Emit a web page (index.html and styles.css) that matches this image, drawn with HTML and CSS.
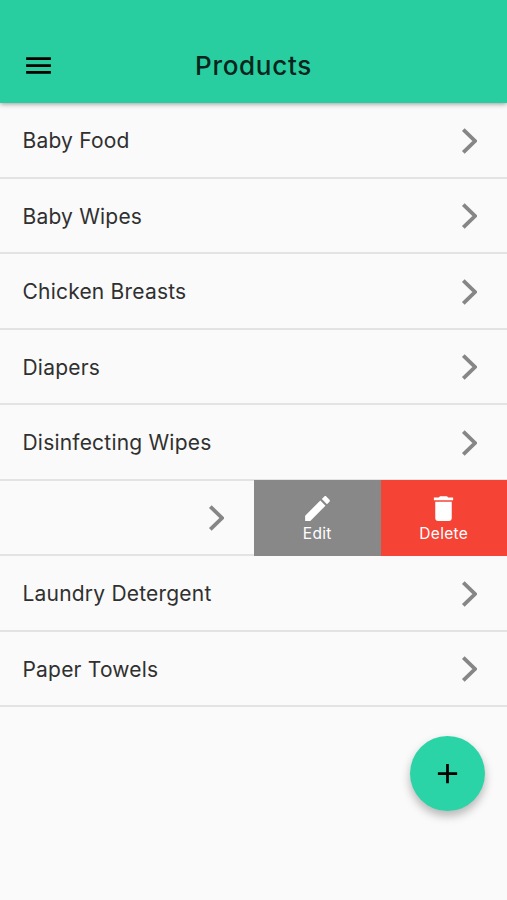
FILE: index.html
```html
<!DOCTYPE html>
<html lang="en">
<head>
  <meta charset="UTF-8" />
  <meta name="viewport" content="width=device-width, initial-scale=1.0"/>
  <title>Products</title>
  <link rel="stylesheet" href="styles.css">
</head>
<body>

  <svg class="symbols" aria-hidden="true">
    <symbol id="chevron" viewBox="0 0 16 28">
      <path d="M2.3 2.6L14 14 2.3 25.4"/>
    </symbol>
  </svg>

  <header class="app-bar">
    <button class="menu-btn" aria-label="Menu">
      <svg viewBox="0 0 24 24"><path d="M3 18h18v-2H3v2zm0-5h18v-2H3v2zm0-7v2h18V6H3z"/></svg>
    </button>
    <h1>Products</h1>
  </header>

  <ul class="products">
    <li class="row"><span>Baby Food</span><svg class="chevron"><use href="#chevron"/></svg></li>
    <li class="row"><span>Baby Wipes</span><svg class="chevron"><use href="#chevron"/></svg></li>
    <li class="row"><span>Chicken Breasts</span><svg class="chevron"><use href="#chevron"/></svg></li>
    <li class="row"><span>Diapers</span><svg class="chevron"><use href="#chevron"/></svg></li>
    <li class="row"><span>Disinfecting Wipes</span><svg class="chevron"><use href="#chevron"/></svg></li>
    <li class="row swiped">
      <div class="slid"><svg class="chevron"><use href="#chevron"/></svg></div>
      <button class="action edit">
        <svg viewBox="0 0 24 24"><path d="M3 17.25V21h3.75L17.81 9.94l-3.75-3.75L3 17.25zM20.71 7.04c.39-.39.39-1.02 0-1.41l-2.34-2.34c-.39-.39-1.02-.39-1.41 0l-1.83 1.83 3.75 3.75 1.83-1.83z"/></svg>
        Edit
      </button>
      <button class="action delete">
        <svg viewBox="0 0 24 24"><path d="M6 19c0 1.1.9 2 2 2h8c1.1 0 2-.9 2-2V7H6v12zM19 4h-3.5l-1-1h-5l-1 1H5v2h14V4z"/></svg>
        Delete
      </button>
    </li>
    <li class="row"><span>Laundry Detergent</span><svg class="chevron"><use href="#chevron"/></svg></li>
    <li class="row"><span>Paper Towels</span><svg class="chevron"><use href="#chevron"/></svg></li>
  </ul>

  <button class="fab" aria-label="Add product">
    <svg viewBox="0 0 24 24"><path d="M19 13h-6v6h-2v-6H5v-2h6V5h2v6h6v2z"/></svg>
  </button>

</body>
</html>
```
FILE: styles.css
```css
* {
  box-sizing: border-box;
}

body {
  font-family: Inter, sans-serif;
  background: #fafafa;
  color: #303030;
  margin: 0;
  height: 100vh;
  overflow: hidden;
}

button {
  padding: 0;
  border: none;
  font-family: inherit;
  cursor: pointer;
}

.symbols {
  display: none;
}

.app-bar {
  display: grid;
  grid-template-columns: 77px 1fr 77px;
  align-items: center;
  height: 103px;
  padding-top: 28px;
  background: #29cea0;
  box-shadow: 0 1px 5px rgba(0, 0, 0, 0.4);
  position: relative;
}

.app-bar h1 {
  margin: 0;
  color: #06251c;
  font-size: 26px;
  font-weight: 500;
  letter-spacing: 0.7px;
  text-align: center;
}

.menu-btn {
  display: flex;
  justify-content: center;
  background: none;
}

.menu-btn svg {
  width: 33px;
  height: 33px;
}

.products {
  list-style: none;
  margin: 0;
  padding: 0;
}

.row {
  display: flex;
  align-items: center;
  justify-content: space-between;
  height: 75.55px;
  padding: 1.5px 30px 0 22.5px;
  border-bottom: 2px solid #e3e3e3;
  font-size: 21px;
  letter-spacing: 0.2px;
}

.chevron {
  width: 16px;
  height: 28px;
  fill: none;
  stroke: #868686;
  stroke-width: 3.8;
}

.swiped {
  padding: 0;
}

.slid {
  display: flex;
  justify-content: flex-end;
  width: 254px;
  padding: 1.5px 30px 0 0;
}

.action {
  display: flex;
  flex-direction: column;
  align-items: center;
  justify-content: center;
  flex: 1;
  height: 76px;
  color: #fff;
  font-size: 15.5px;
  letter-spacing: 0.3px;
  line-height: 18px;
}

.action svg {
  width: 33px;
  height: 33px;
  fill: #fff;
}

.edit {
  background: #888;
}

.delete {
  background: #f54336;
}

.fab {
  position: fixed;
  right: 22px;
  bottom: 89px;
  display: flex;
  align-items: center;
  justify-content: center;
  width: 75px;
  height: 75px;
  border-radius: 50%;
  background: #2bd4a6;
  box-shadow: 0 5px 10px rgba(0, 0, 0, 0.28);
}

.fab svg {
  width: 33px;
  height: 33px;
}
```
